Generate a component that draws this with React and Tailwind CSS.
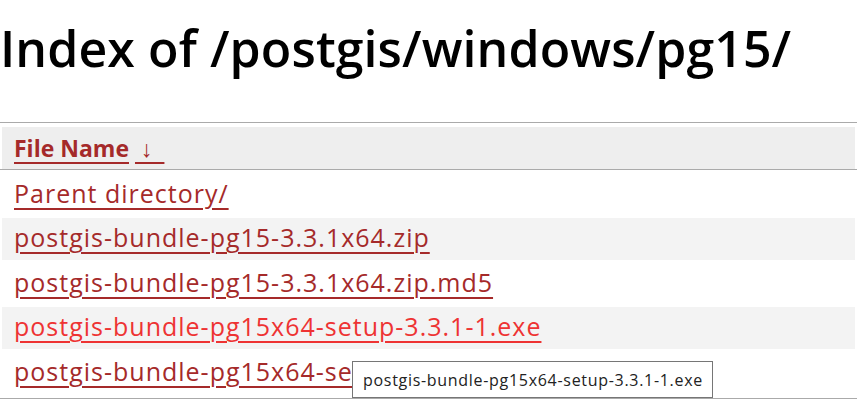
// <== IMPORTS ==>
import React from "react";

// FILE ROWS
const files = [
  { name: "Parent directory/", hover: false },
  { name: "postgis-bundle-pg15-3.3.1x64.zip", hover: false },
  { name: "postgis-bundle-pg15-3.3.1x64.zip.md5", hover: false },
  { name: "postgis-bundle-pg15x64-setup-3.3.1-1.exe", hover: true },
  { name: "postgis-bundle-pg15x64-setup-3.3.1-1.exe", hover: false },
];

const App = () => {
  return (
    <div className="w-[857px] h-[420px] overflow-hidden bg-white font-['Open_Sans',sans-serif] relative">
      {/* TITLE */}
      <h1 className="pt-[18px] h-[122px] text-[50px] leading-[60px] text-black font-semibold tracking-[0.1px]">
        Index of /postgis/windows/pg15/
      </h1>
      {/* LISTING TABLE */}
      <div className="border-t border-b border-[#aaaaaa] px-[2px] pt-[4px] pb-[4px]">
        {/* HEADER ROW */}
        <div className="h-[42px] bg-[#eeeeee] flex items-center pl-[12px] text-[23px] font-bold">
          <a className="text-[#a52a2a] underline decoration-2 underline-offset-[5px]">File Name</a>
          <span>&nbsp;</span>
          <a className="text-[#a52a2a] underline decoration-2 underline-offset-[5px]">&nbsp;↓&nbsp;&nbsp;</a>
        </div>
        <div className="border-b border-[#aaaaaa] -mx-[2px]" />
        {/* FILE ROWS */}
        <div className="flex flex-col gap-[2px] pt-[3px]">
          {files.map((f, i) => (
            <div
              key={i}
              className={`h-[42.5px] flex items-center pl-[12px] pb-[2px] text-[25px] tracking-[1px] ${
                i % 2 === 1 ? "bg-[#f3f3f3]" : "bg-white"
              }`}
            >
              <a
                className={`underline decoration-2 underline-offset-[5px] ${
                  f.hover ? "text-[#ee3333]" : "text-[#a52a2a]"
                }`}
              >
                {f.name}
              </a>
            </div>
          ))}
        </div>
      </div>
      {/* TOOLTIP */}
      <div className="absolute left-[352px] top-[361px] w-[361px] h-[37px] border border-[#767676] bg-white flex items-center pl-[10px] text-[16px] tracking-[0.7px] text-[#222222]">
        postgis-bundle-pg15x64-setup-3.3.1-1.exe
      </div>
    </div>
  );
};

export default App;
